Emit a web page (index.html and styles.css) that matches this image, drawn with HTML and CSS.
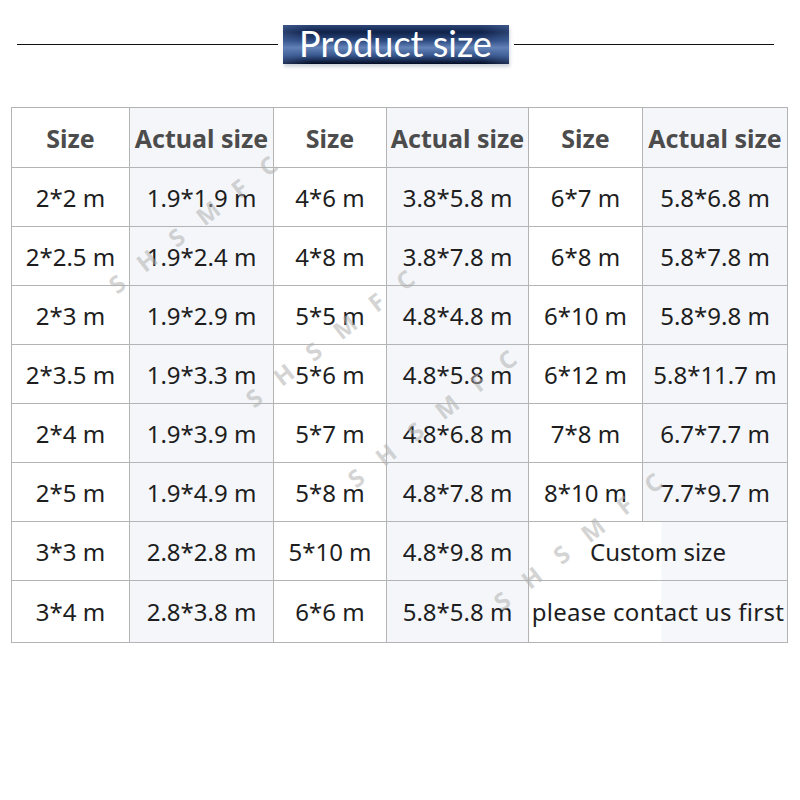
FILE: index.html
```html
<!DOCTYPE html>
<html lang="en">
<head>
<meta charset="utf-8">
<title>Product size</title>
<link rel="stylesheet" href="styles.css">
</head>
<body>
<div class="page">
  <header class="title-row">
    <span class="rule"></span>
    <h1 class="title">Product size</h1>
    <span class="rule"></span>
  </header>

  <table class="sizes">
    <colgroup>
      <col class="c1"><col class="c2"><col class="c3"><col class="c4"><col class="c5"><col class="c6">
    </colgroup>
    <thead>
      <tr class="head">
        <th>Size</th><th class="alt">Actual size</th>
        <th>Size</th><th class="alt">Actual size</th>
        <th>Size</th><th class="alt">Actual size</th>
      </tr>
    </thead>
    <tbody>
      <tr><td>2*2 m</td><td class="alt">1.9*1.9 m</td><td>4*6 m</td><td class="alt">3.8*5.8 m</td><td>6*7 m</td><td class="alt">5.8*6.8 m</td></tr>
      <tr><td>2*2.5 m</td><td class="alt">1.9*2.4 m</td><td>4*8 m</td><td class="alt">3.8*7.8 m</td><td>6*8 m</td><td class="alt">5.8*7.8 m</td></tr>
      <tr><td>2*3 m</td><td class="alt">1.9*2.9 m</td><td>5*5 m</td><td class="alt">4.8*4.8 m</td><td>6*10 m</td><td class="alt">5.8*9.8 m</td></tr>
      <tr><td>2*3.5 m</td><td class="alt">1.9*3.3 m</td><td>5*6 m</td><td class="alt">4.8*5.8 m</td><td>6*12 m</td><td class="alt">5.8*11.7 m</td></tr>
      <tr><td>2*4 m</td><td class="alt">1.9*3.9 m</td><td>5*7 m</td><td class="alt">4.8*6.8 m</td><td>7*8 m</td><td class="alt">6.7*7.7 m</td></tr>
      <tr><td>2*5 m</td><td class="alt">1.9*4.9 m</td><td>5*8 m</td><td class="alt">4.8*7.8 m</td><td>8*10 m</td><td class="alt">7.7*9.7 m</td></tr>
      <tr><td>3*3 m</td><td class="alt">2.8*2.8 m</td><td>5*10 m</td><td class="alt">4.8*9.8 m</td><td colspan="2" class="merged">Custom size</td></tr>
      <tr class="last"><td>3*4 m</td><td class="alt">2.8*3.8 m</td><td>6*6 m</td><td class="alt">5.8*5.8 m</td><td colspan="2" class="merged contact">please contact us first</td></tr>
    </tbody>
  </table>

  <div class="wm wm1" aria-hidden="true">SHSMFC</div>
  <div class="wm wm2" aria-hidden="true">SHSMFC</div>
  <div class="wm wm3" aria-hidden="true">SHSMFC</div>
  <div class="wm wm4" aria-hidden="true">SHSMFC</div>
</div>
</body>
</html>
```

FILE: styles.css
```css
html, body {
  margin: 0;
  padding: 0;
  background: #ffffff;
}

.page {
  position: relative;
  width: 800px;
  height: 800px;
  overflow: hidden;
  font-family: "Noto Sans", "Liberation Sans", sans-serif;
}

/* ---------- title ---------- */
.title-row {
  display: flex;
  align-items: center;
  gap: 4px;
  padding: 24px 26px 0 17px;
  height: 40px;
}

.rule {
  flex: 1;
  height: 1px;
  background: #111;
}

.title {
  margin: 0 1px;
  width: 226px;
  height: 39px;
  display: flex;
  align-items: center;
  justify-content: center;
  font-family: Lato, "Liberation Sans", sans-serif;
  font-weight: 400;
  font-size: 36px;
  line-height: 1;
  color: #ffffff;
  background:
    linear-gradient(to right, rgba(90,120,180,0.35), rgba(0,0,0,0) 12%, rgba(0,0,0,0) 88%, rgba(90,120,180,0.35)),
    linear-gradient(to bottom, #2e4778 0%, #0f2148 18%, #2c4a80 40%, #6483b8 58%, #38578e 78%, #020b24 100%);
  box-shadow: 1px 3px 3px rgba(150, 160, 180, 0.45);
  padding-bottom: 2px;
  box-sizing: border-box;
}

/* ---------- table ---------- */
.sizes {
  margin: 43px 0 0 11px;
  width: 776px;
  border-collapse: collapse;
  table-layout: fixed;
  color: #1e1e1e;
}

.c1 { width: 118px; }
.c2 { width: 144px; }
.c3 { width: 113px; }
.c4 { width: 142px; }
.c5 { width: 114px; }
.c6 { width: 145px; }

.sizes th,
.sizes td {
  border: 1px solid #b4b4b4;
  padding: 0;
  text-align: center;
  white-space: nowrap;
  overflow: visible;
}

.sizes th {
  height: 59px;
  font-size: 25px;
  font-weight: 700;
  color: #4c4c4c;
}

.sizes td {
  height: 58px;
  font-size: 24px;
  font-weight: 400;
}

.sizes tr.last td {
  height: 61px;
}

.alt {
  background: #f4f6fa;
}

.merged {
  background: linear-gradient(to right, #ffffff 0%, #ffffff 51%, #f5f7fa 51%, #f5f7fa 100%);
}

.contact {
  letter-spacing: 0.3px;
}

/* ---------- watermark ---------- */
.wm {
  position: absolute;
  font-family: "Noto Sans", "Liberation Sans", sans-serif;
  font-weight: 700;
  font-size: 24px;
  line-height: 24px;
  letter-spacing: 22px;
  color: rgba(175, 175, 175, 0.55);
  transform: rotate(-38deg);
  transform-origin: 8px 12px;
  pointer-events: none;
  white-space: nowrap;
}

.wm1 { left: 110px; top: 271px; }
.wm2 { left: 247px; top: 385px; }
.wm3 { left: 349px; top: 465px; }
.wm4 { left: 495px; top: 588px; }
```
